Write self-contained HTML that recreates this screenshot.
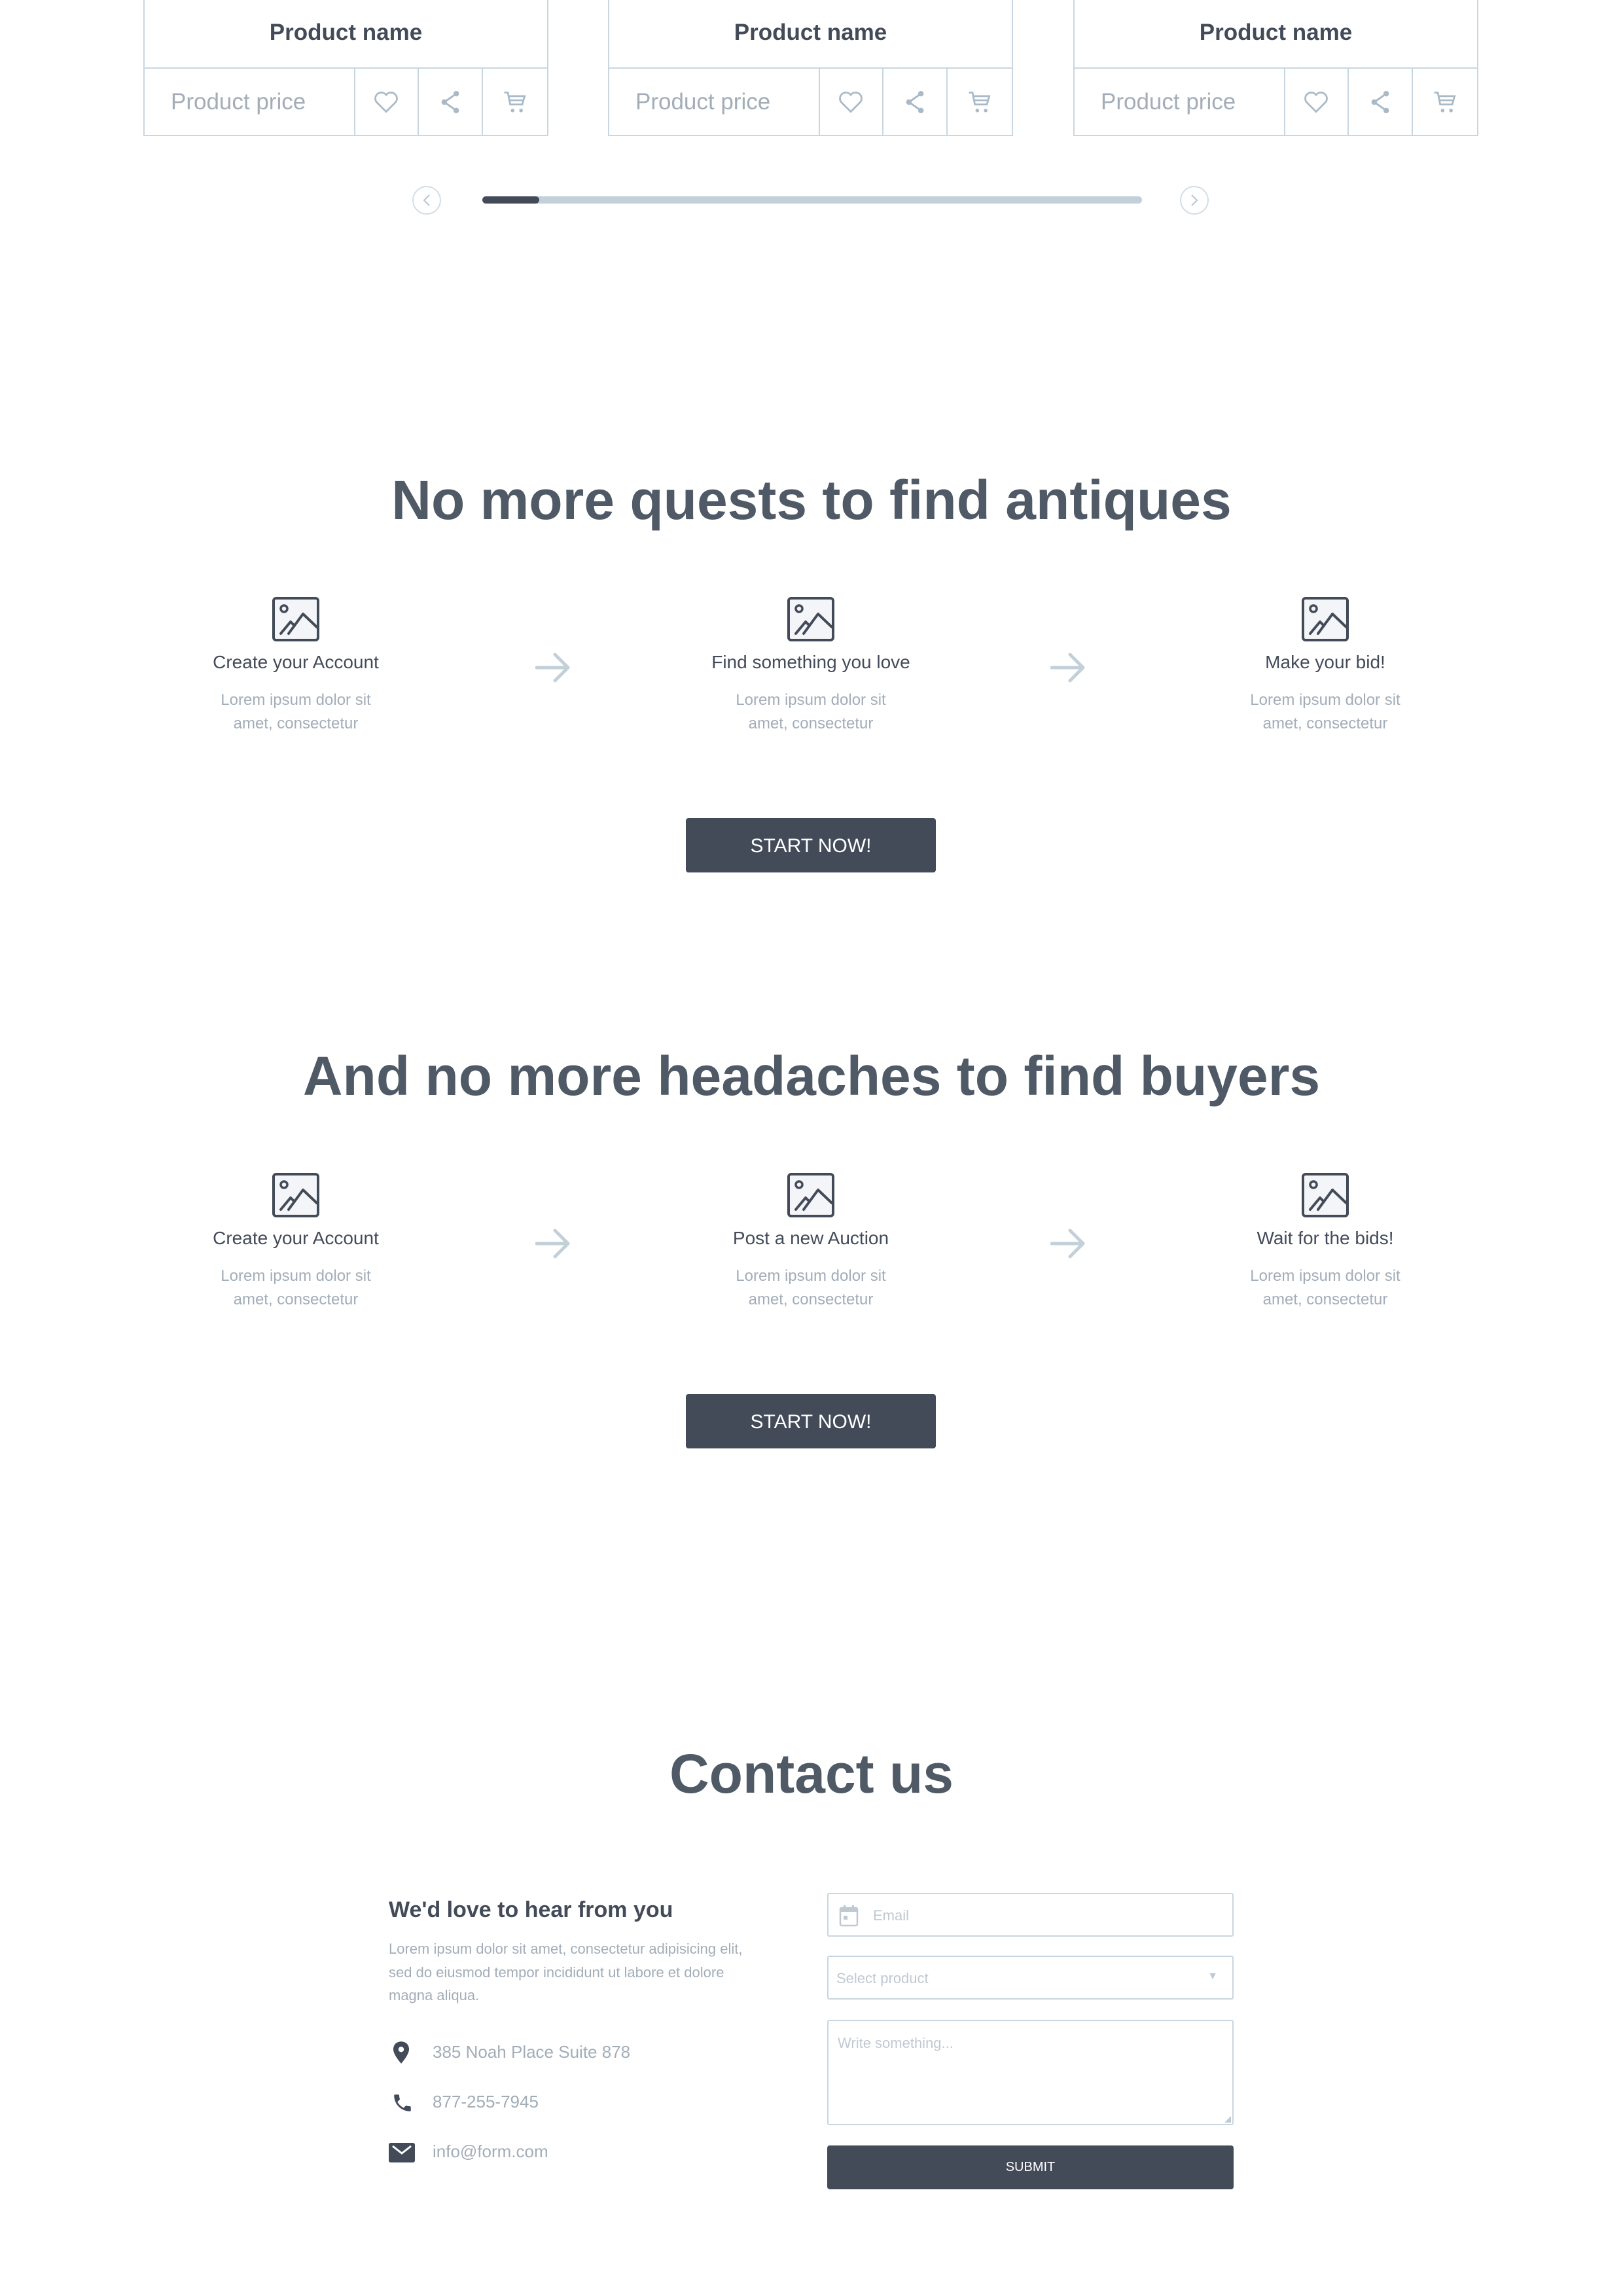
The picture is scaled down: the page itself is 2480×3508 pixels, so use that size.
<!DOCTYPE html>
<html><head><meta charset="utf-8"><style>
*{margin:0;padding:0;box-sizing:border-box}
body{width:2480px;height:3508px;background:#fff;position:relative;overflow:hidden;font-family:"Liberation Sans",sans-serif;color:#434b59}
.a{position:absolute}
.card{position:absolute;top:-4px;width:619px;height:212px;border:2px solid #c9d6df;border-top:none}
.card .nm{height:109px;border-bottom:2px solid #c9d6df;text-align:center;font-weight:bold;font-size:35px;line-height:107px;color:#434b59}
.card .row{display:flex;height:101px}
.card .pr{width:322px;border-right:2px solid #c9d6df;font-size:35px;color:#a3adb8;line-height:101px;padding-left:40px}
.card .ic{width:98px;border-right:2px solid #c9d6df;display:flex;align-items:center;justify-content:center}
.card .ic:last-child{border-right:none}
.h{position:absolute;left:0;width:2480px;text-align:center;font-weight:bold;font-size:84px;color:#4f5a66}
.step{position:absolute;width:500px;text-align:center}
.step svg{display:block;margin:0 auto}
.step .t{font-size:28px;color:#434b59;margin-top:16px}
.step .d{font-size:24px;color:#a3adb8;line-height:36px;margin-top:24px}
.arr{position:absolute}
.btn{position:absolute;left:1048px;width:382px;height:83px;background:#434b59;border-radius:4px;color:#fff;font-size:30px;text-align:center;line-height:86px}
.inp{position:absolute;left:1264px;width:621px;border:2px solid #c9d6df;border-radius:3px;color:#c0c9d2;font-size:22px}
</style></head><body>

<!-- cards -->
<div class="card" style="left:219px"><div class="nm">Product name</div><div class="row"><div class="pr">Product price</div>
<div class="ic"><svg width="44" height="44" viewBox="0 0 24 24"><path d="M12 20 L4 12 A4.5 4.5 0 0 1 12 6 A4.5 4.5 0 0 1 20 12 Z" fill="none" stroke="#a9b9c6" stroke-width="1.5"/></svg></div>
<div class="ic"><svg width="44" height="44" viewBox="0 0 24 24"><g fill="#a9b9c6"><circle cx="17" cy="5" r="2.3"/><circle cx="7" cy="12" r="2.3"/><circle cx="17" cy="19" r="2.3"/></g><path d="M17 5 L7 12 L17 19" stroke="#a9b9c6" stroke-width="1.6" fill="none"/></svg></div>
<div class="ic"><svg width="44" height="44" viewBox="0 0 24 24"><path d="M3 4h3l2 10h10l2-7H7" fill="none" stroke="#a9b9c6" stroke-width="1.5"/><path d="M7.5 10.5h12" stroke="#a9b9c6" stroke-width="1.3"/><circle cx="10" cy="19" r="1.5" fill="#a9b9c6"/><circle cx="17" cy="19" r="1.5" fill="#a9b9c6"/></svg></div></div></div>
<div class="card" style="left:929px"><div class="nm">Product name</div><div class="row"><div class="pr">Product price</div>
<div class="ic"><svg width="44" height="44" viewBox="0 0 24 24"><path d="M12 20 L4 12 A4.5 4.5 0 0 1 12 6 A4.5 4.5 0 0 1 20 12 Z" fill="none" stroke="#a9b9c6" stroke-width="1.5"/></svg></div>
<div class="ic"><svg width="44" height="44" viewBox="0 0 24 24"><g fill="#a9b9c6"><circle cx="17" cy="5" r="2.3"/><circle cx="7" cy="12" r="2.3"/><circle cx="17" cy="19" r="2.3"/></g><path d="M17 5 L7 12 L17 19" stroke="#a9b9c6" stroke-width="1.6" fill="none"/></svg></div>
<div class="ic"><svg width="44" height="44" viewBox="0 0 24 24"><path d="M3 4h3l2 10h10l2-7H7" fill="none" stroke="#a9b9c6" stroke-width="1.5"/><path d="M7.5 10.5h12" stroke="#a9b9c6" stroke-width="1.3"/><circle cx="10" cy="19" r="1.5" fill="#a9b9c6"/><circle cx="17" cy="19" r="1.5" fill="#a9b9c6"/></svg></div></div></div>
<div class="card" style="left:1640px"><div class="nm">Product name</div><div class="row"><div class="pr">Product price</div>
<div class="ic"><svg width="44" height="44" viewBox="0 0 24 24"><path d="M12 20 L4 12 A4.5 4.5 0 0 1 12 6 A4.5 4.5 0 0 1 20 12 Z" fill="none" stroke="#a9b9c6" stroke-width="1.5"/></svg></div>
<div class="ic"><svg width="44" height="44" viewBox="0 0 24 24"><g fill="#a9b9c6"><circle cx="17" cy="5" r="2.3"/><circle cx="7" cy="12" r="2.3"/><circle cx="17" cy="19" r="2.3"/></g><path d="M17 5 L7 12 L17 19" stroke="#a9b9c6" stroke-width="1.6" fill="none"/></svg></div>
<div class="ic"><svg width="44" height="44" viewBox="0 0 24 24"><path d="M3 4h3l2 10h10l2-7H7" fill="none" stroke="#a9b9c6" stroke-width="1.5"/><path d="M7.5 10.5h12" stroke="#a9b9c6" stroke-width="1.3"/><circle cx="10" cy="19" r="1.5" fill="#a9b9c6"/><circle cx="17" cy="19" r="1.5" fill="#a9b9c6"/></svg></div></div></div>

<!-- slider -->
<svg class="a" style="left:620px;top:274px" width="1240" height="64">
<circle cx="32" cy="32" r="21" fill="none" stroke="#d3dde4" stroke-width="2"/><path d="M36 24 L28 32 L36 40" fill="none" stroke="#b8c6d0" stroke-width="2"/>
<rect x="117" y="26" width="1008" height="11" rx="5.5" fill="#c2d0d9"/><rect x="117" y="26" width="87" height="11" rx="5.5" fill="#434b59"/>
<circle cx="1205" cy="32" r="21" fill="none" stroke="#d3dde4" stroke-width="2"/><path d="M1201 24 L1209 32 L1201 40" fill="none" stroke="#b8c6d0" stroke-width="2"/>
</svg>

<div class="h" style="top:716px">No more quests to find antiques</div>
<div class="h" style="top:1596px">And no more headaches to find buyers</div>
<div class="h" style="top:2662px">Contact us</div>

<!-- steps -->
<div class="step" style="left:202px;top:912px"><svg width="72" height="68" viewBox="0 0 72 68"><rect x="2" y="2" width="68" height="64" rx="4" fill="#f3f5f8" stroke="#434b59" stroke-width="4"/><circle cx="18" cy="18" r="5" fill="none" stroke="#434b59" stroke-width="3.5"/><path d="M13 56 L28 38 L34 44 M25 56 L47 26 L68 46" fill="none" stroke="#434b59" stroke-width="4" stroke-linecap="round" stroke-linejoin="round"/></svg><div class="t">Create your Account</div><div class="d">Lorem ipsum dolor sit<br>amet, consectetur</div></div>
<div class="step" style="left:989px;top:912px"><svg width="72" height="68" viewBox="0 0 72 68"><rect x="2" y="2" width="68" height="64" rx="4" fill="#f3f5f8" stroke="#434b59" stroke-width="4"/><circle cx="18" cy="18" r="5" fill="none" stroke="#434b59" stroke-width="3.5"/><path d="M13 56 L28 38 L34 44 M25 56 L47 26 L68 46" fill="none" stroke="#434b59" stroke-width="4" stroke-linecap="round" stroke-linejoin="round"/></svg><div class="t">Find something you love</div><div class="d">Lorem ipsum dolor sit<br>amet, consectetur</div></div>
<div class="step" style="left:1775px;top:912px"><svg width="72" height="68" viewBox="0 0 72 68"><rect x="2" y="2" width="68" height="64" rx="4" fill="#f3f5f8" stroke="#434b59" stroke-width="4"/><circle cx="18" cy="18" r="5" fill="none" stroke="#434b59" stroke-width="3.5"/><path d="M13 56 L28 38 L34 44 M25 56 L47 26 L68 46" fill="none" stroke="#434b59" stroke-width="4" stroke-linecap="round" stroke-linejoin="round"/></svg><div class="t">Make your bid!</div><div class="d">Lorem ipsum dolor sit<br>amet, consectetur</div></div>

<div class="step" style="left:202px;top:1792px"><svg width="72" height="68" viewBox="0 0 72 68"><rect x="2" y="2" width="68" height="64" rx="4" fill="#f3f5f8" stroke="#434b59" stroke-width="4"/><circle cx="18" cy="18" r="5" fill="none" stroke="#434b59" stroke-width="3.5"/><path d="M13 56 L28 38 L34 44 M25 56 L47 26 L68 46" fill="none" stroke="#434b59" stroke-width="4" stroke-linecap="round" stroke-linejoin="round"/></svg><div class="t">Create your Account</div><div class="d">Lorem ipsum dolor sit<br>amet, consectetur</div></div>
<div class="step" style="left:989px;top:1792px"><svg width="72" height="68" viewBox="0 0 72 68"><rect x="2" y="2" width="68" height="64" rx="4" fill="#f3f5f8" stroke="#434b59" stroke-width="4"/><circle cx="18" cy="18" r="5" fill="none" stroke="#434b59" stroke-width="3.5"/><path d="M13 56 L28 38 L34 44 M25 56 L47 26 L68 46" fill="none" stroke="#434b59" stroke-width="4" stroke-linecap="round" stroke-linejoin="round"/></svg><div class="t">Post a new Auction</div><div class="d">Lorem ipsum dolor sit<br>amet, consectetur</div></div>
<div class="step" style="left:1775px;top:1792px"><svg width="72" height="68" viewBox="0 0 72 68"><rect x="2" y="2" width="68" height="64" rx="4" fill="#f3f5f8" stroke="#434b59" stroke-width="4"/><circle cx="18" cy="18" r="5" fill="none" stroke="#434b59" stroke-width="3.5"/><path d="M13 56 L28 38 L34 44 M25 56 L47 26 L68 46" fill="none" stroke="#434b59" stroke-width="4" stroke-linecap="round" stroke-linejoin="round"/></svg><div class="t">Wait for the bids!</div><div class="d">Lorem ipsum dolor sit<br>amet, consectetur</div></div>

<!-- arrows -->
<svg class="arr" style="left:818px;top:996px" width="56" height="48"><path d="M2 24 H50 M30 4 L50 24 L30 44" fill="none" stroke="#c2d0d9" stroke-width="5" stroke-linecap="round" stroke-linejoin="round"/></svg>
<svg class="arr" style="left:1605px;top:996px" width="56" height="48"><path d="M2 24 H50 M30 4 L50 24 L30 44" fill="none" stroke="#c2d0d9" stroke-width="5" stroke-linecap="round" stroke-linejoin="round"/></svg>
<svg class="arr" style="left:818px;top:1876px" width="56" height="48"><path d="M2 24 H50 M30 4 L50 24 L30 44" fill="none" stroke="#c2d0d9" stroke-width="5" stroke-linecap="round" stroke-linejoin="round"/></svg>
<svg class="arr" style="left:1605px;top:1876px" width="56" height="48"><path d="M2 24 H50 M30 4 L50 24 L30 44" fill="none" stroke="#c2d0d9" stroke-width="5" stroke-linecap="round" stroke-linejoin="round"/></svg>

<div class="btn" style="top:1250px">START NOW!</div>
<div class="btn" style="top:2130px">START NOW!</div>

<!-- contact left -->
<div class="a" style="left:594px;top:2899px;font-size:34px;font-weight:bold;color:#434b59">We'd love to hear from you</div>
<div class="a" style="left:594px;top:2960px;width:640px;font-size:22px;line-height:35.5px;color:#a3adb8">Lorem ipsum dolor sit amet, consectetur adipisicing elit,<br>sed do eiusmod tempor incididunt ut labore et dolore<br>magna aliqua.</div>

<svg class="a" style="left:598px;top:3118px" width="30" height="36" viewBox="0 0 24 30"><path d="M12 1 C6 1 2 5 2 11 C2 18 12 29 12 29 C12 29 22 18 22 11 C22 5 18 1 12 1 Z" fill="#434b59"/><circle cx="12" cy="11" r="3.5" fill="#fff"/></svg>
<div class="a" style="left:661px;top:3120px;font-size:26px;color:#a3adb8">385 Noah Place Suite 878</div>
<svg class="a" style="left:598px;top:3196px" width="34" height="34" viewBox="0 0 24 24"><path d="M6.6 10.8c1.4 2.8 3.8 5.1 6.6 6.6l2.2-2.2c.3-.3.7-.4 1-.2 1.1.4 2.3.6 3.6.6.6 0 1 .4 1 1V20c0 .6-.4 1-1 1C10.6 21 3 13.4 3 4c0-.6.4-1 1-1h3.5c.6 0 1 .4 1 1 0 1.3.2 2.5.6 3.6.1.3 0 .7-.2 1L6.6 10.8z" fill="#434b59"/></svg>
<div class="a" style="left:661px;top:3196px;font-size:26px;color:#a3adb8">877-255-7945</div>
<svg class="a" style="left:594px;top:3274px" width="40" height="30" viewBox="0 0 40 30"><rect x="0" y="0" width="40" height="30" rx="3" fill="#434b59"/><path d="M6 5 L20 16 L34 5" fill="none" stroke="#fff" stroke-width="3"/></svg>
<div class="a" style="left:661px;top:3272px;font-size:26px;color:#a3adb8">info@form.com</div>

<!-- form -->
<div class="inp" style="top:2892px;height:67px">
<svg class="a" style="left:16px;top:16px" width="30" height="34" viewBox="0 0 30 34"><rect x="2" y="5" width="26" height="27" rx="2" fill="none" stroke="#c0c9d2" stroke-width="2.5"/><rect x="2" y="5" width="26" height="6" fill="#c0c9d2"/><rect x="7" y="1" width="3" height="6" fill="#c0c9d2"/><rect x="20" y="1" width="3" height="6" fill="#c0c9d2"/><rect x="7" y="17" width="6" height="6" fill="#c0c9d2"/></svg>
<span class="a" style="left:68px;top:20px">Email</span></div>
<div class="inp" style="top:2988px;height:67px"><span class="a" style="left:12px;top:20px">Select product</span><span class="a" style="right:22px;top:21px;font-size:16px">▼</span></div>
<div class="inp" style="top:3086px;height:161px"><span class="a" style="left:14px;top:21px">Write something...</span>
<svg class="a" style="right:2px;bottom:2px" width="10" height="10"><path d="M10 0 L10 10 L0 10 Z" fill="#c0c9d2"/></svg></div>
<div class="a" style="left:1264px;top:3278px;width:621px;height:67px;background:#434b59;border-radius:4px;color:#fff;font-size:20px;text-align:center;line-height:67px">SUBMIT</div>

</body></html>
